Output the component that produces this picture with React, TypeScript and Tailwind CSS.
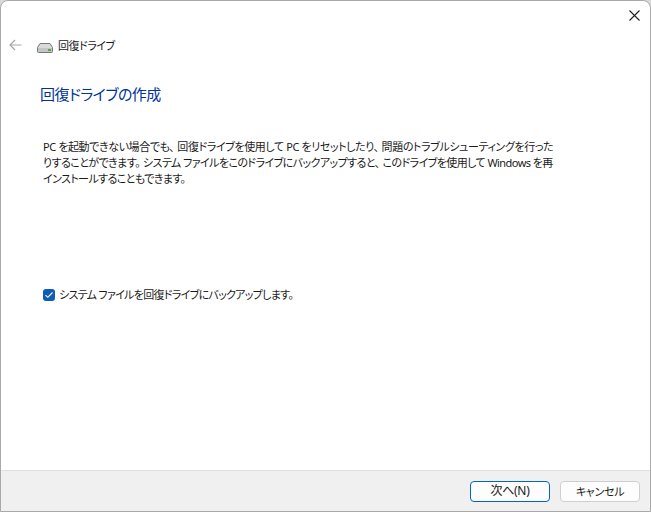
import React from "react";

const jp = { fontFamily: '"Noto Sans", "Noto Sans CJK JP", sans-serif' };

function DriveIcon() {
  return (
    <svg width="16" height="10" viewBox="0 0 16 10" className="mt-[5px]">
      <path d="M3 0.5H13L15.5 4.5V8.5Q15.5 9.5 14.5 9.5H1.5Q0.5 9.5 0.5 8.5V4.5Z" fill="#d8dadb" stroke="#74787a" strokeWidth="1" />
      <rect x="1" y="5" width="14" height="4" fill="#c3c6c7" />
      <rect x="11" y="6" width="3" height="2" fill="#5ea63a" />
    </svg>
  );
}

function G() {
  return <span className="inline-block w-[3px]" />;
}

export default function App() {
  return (
    <div className="w-[651px] h-[512px] bg-[#d9d9d9] [font-feature-settings:'palt']" style={jp}>
      <div className="w-full h-full flex flex-col bg-white border border-[#a9a9a9] rounded-t-[8px] overflow-hidden text-[#1a1a1a]">
        <div className="h-[32px] flex justify-end items-start pt-[9px] pr-[10px]">
          <svg width="11" height="11" viewBox="0 0 11 11">
            <path d="M0.5 0.5L10.5 10.5M10.5 0.5L0.5 10.5" stroke="#222" strokeWidth="1.1" fill="none" />
          </svg>
        </div>
        <div className="h-[24px] flex items-center pl-[8px]">
          <svg width="13" height="12" viewBox="0 0 13 12">
            <path d="M12.5 6H1M6 1L1 6L6 11" stroke="#a6a6a6" strokeWidth="1.2" fill="none" />
          </svg>
          <div className="ml-[15px] mr-[5px] flex"><DriveIcon /></div>
          <span className="text-[11px] tracking-[-0.5px] leading-[24px] whitespace-nowrap mt-[1px]">回復ドライブ</span>
        </div>
        <h1 className="ml-[39px] mt-[27px] text-[15px] tracking-[-0.55px] leading-[20px] font-normal text-[#003399] whitespace-nowrap">回復ドライブの作成</h1>
        <div className="ml-[42px] mt-[35px] text-[11px] leading-[16px] whitespace-nowrap">
          <p className="tracking-[-0.4px]">PC を起動できない場合でも、<G />回復ドライブを使用して PC をリセットしたり、<G />問題のトラブルシューティングを行った</p>
          <p className="tracking-[-0.57px]">りすることができます。<G />システム ファイルをこのドライブにバックアップすると、<G />このドライブを使用して Windows を再</p>
          <p className="tracking-[-0.6px]">インストールすることもできます。</p>
        </div>
        <label className="ml-[42px] mt-[100px] flex items-center gap-[4px] text-[11px] tracking-[-0.7px] leading-[16px] whitespace-nowrap">
          <span className="w-[12px] h-[12px] rounded-[3px] bg-[#0f5cb5] flex items-center justify-center">
            <svg width="10" height="8" viewBox="0 0 10 8">
              <path d="M1.5 4.2L3.8 6.3L8.5 1.5" stroke="#fff" strokeWidth="1.1" fill="none" />
            </svg>
          </span>
          システム ファイルを回復ドライブにバックアップします。
        </label>
        <div className="mt-auto h-[41px] bg-[#f0f0f0] border-t border-[#dfdfdf] flex items-center justify-end gap-[10px] pr-[10px]">
          <button className="w-[80px] h-[21px] rounded-[4px] bg-[#fdfdfd] border border-[#0067c0] text-[12px] tracking-[-0.3px] leading-none">次へ(N)</button>
          <button className="w-[80px] h-[21px] rounded-[4px] bg-[#fdfdfd] border border-[#cfcfcf] text-[11px] tracking-[-0.3px] leading-none">キャンセル</button>
        </div>
      </div>
    </div>
  );
}
